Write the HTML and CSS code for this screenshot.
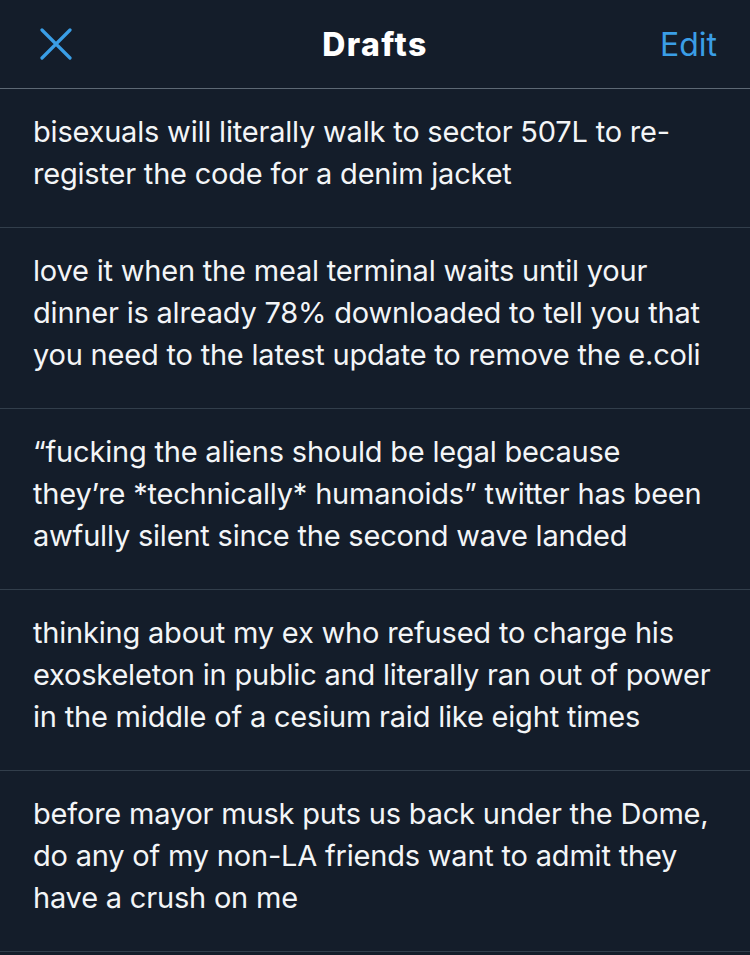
FILE: index.html
```html
<!DOCTYPE html>
<html lang="en">
<head>
<meta charset="utf-8">
<title>Drafts</title>
<link rel="stylesheet" href="styles.css">
</head>
<body>
<div class="app">
  <header class="topbar">
    <button class="close" aria-label="Close">
      <svg width="32" height="32" viewBox="0 0 32 32"><path d="M2 2 L30 30 M30 2 L2 30" stroke="#3a9ee6" stroke-width="3.2" stroke-linecap="round" fill="none"/></svg>
    </button>
    <h1 class="title">Drafts</h1>
    <button class="edit">Edit</button>
  </header>
  <ul class="drafts">
    <li class="draft">bisexuals will literally walk to sector 507L to re-register the code for a denim jacket</li>
    <li class="draft">love it when the meal terminal waits until your dinner is already 78% downloaded to tell you that you need to the latest update to remove the e.coli</li>
    <li class="draft">“fucking the aliens should be legal because they’re *technically* humanoids” twitter has been awfully silent since the second wave landed</li>
    <li class="draft">thinking about my ex who refused to charge his exoskeleton in public and literally ran out of power in the middle of a cesium raid like eight times</li>
    <li class="draft">before mayor musk puts us back under the Dome, do any of my non-LA friends want to admit they have a crush on me</li>
  </ul>
</div>
</body>
</html>
```
FILE: styles.css
```css
html, body {
  margin: 0;
  padding: 0;
  background: #141d2a;
}
body {
  font-family: "Inter", "Liberation Sans", sans-serif;
  color: #f3f5f7;
}
.app {
  width: 750px;
  min-height: 955px;
  background: #141d2a;
}
.topbar {
  height: 88px;
  display: flex;
  align-items: center;
  justify-content: space-between;
  padding: 0 33px 0 40px;
  border-bottom: 1px solid #5d6874;
  position: relative;
}
.close {
  background: none;
  border: 0;
  padding: 0;
  width: 32px;
  height: 32px;
  display: flex;
}
.title {
  position: absolute;
  left: 0;
  right: 0;
  text-align: center;
  margin: 0;
  font-size: 32px;
  font-weight: 800;
  letter-spacing: 1.4px;
  color: #ffffff;
  pointer-events: none;
}
.edit {
  background: none;
  border: 0;
  padding: 0;
  font-family: inherit;
  font-size: 32px;
  color: #3a9ee6;
  font-weight: 400;
}
.drafts {
  list-style: none;
  margin: 0;
  padding: 0;
}
.draft {
  padding: 22px 33px 32px 33px;
  font-size: 29px;
  letter-spacing: -0.2px;
  line-height: 42px;
  border-bottom: 1px solid #323e4b;
}
```
